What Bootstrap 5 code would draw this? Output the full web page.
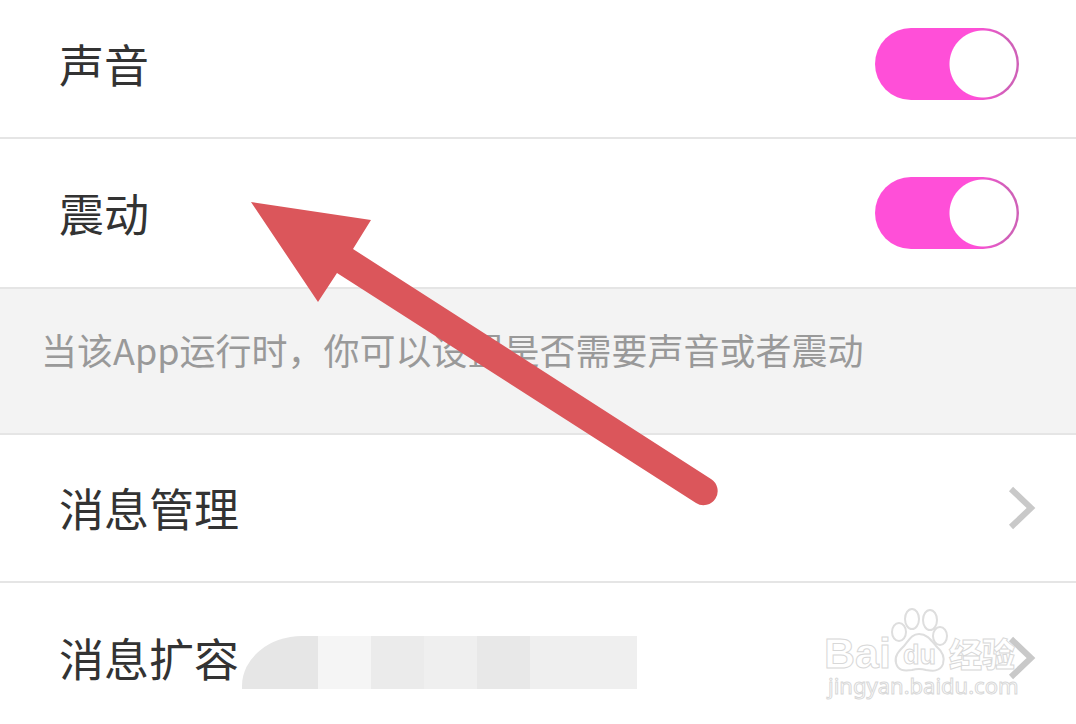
<!DOCTYPE html>
<html lang="zh-CN">
<head>
<meta charset="utf-8">
<meta name="viewport" content="width=device-width, initial-scale=1">
<title>消息设置</title>
<link href="https://cdn.jsdelivr.net/npm/bootstrap@5.3.0/dist/css/bootstrap.min.css" rel="stylesheet">
<style>
  body { font-family: "Noto Sans CJK SC", sans-serif; background: #fff; color: #333; overflow: hidden; }
  .setting-row { min-height: 150px; padding: 0 57px 0 59px; border-bottom: 2px solid #e5e5e5; }
  .setting-row.is-first { min-height: 139px; padding-bottom: 10px; }
  .setting-row.is-nav { min-height: 148px; padding-right: 40px; color: #333; }
  .setting-row.is-last { min-height: 141px; padding-top: 9px; border-bottom: 0; }
  .setting-label { font-size: 45px; line-height: 60px; }
  .form-check-input.pink-switch {
    width: 144px; height: 72px; margin: 0; border: 0; cursor: pointer; border-radius: 36px;
    background: radial-gradient(circle at 108px 36px, #fff 33px, transparent 34px), linear-gradient(90deg, #ff4fd8 100px, #d060b8 132px);
  }
  .hint-band { min-height: 146px; padding: 33px 41px; background: #f3f3f3; border-bottom: 2px solid #e5e5e5; color: #999; font-size: 36px; line-height: 54px; }
  .redacted { height: 53px; width: 395px; margin: 8px 0 0 3px; border-top-left-radius: 60px 50px; overflow: hidden; }
  .redacted > span { flex: 53 1 0; background: #efefef; }
  .redacted > .tone-wide { flex-grow: 76; background: #e6e6e6; }
  .redacted > .tone-pale { background: #f5f5f5; }
  .redacted > .tone-mid { background: #ebebeb; }
  .redacted > .tone-deep { background: #e8e8e8; }
  .redacted > .tone-end { flex-grow: 107; }
  .pointer-arrow { top: 195px; left: 245px; pointer-events: none; }
  .watermark { right: 50px; bottom: 16px; pointer-events: none; }
</style>
</head>
<body>
<main class="position-relative">
  <div class="setting-row is-first d-flex align-items-center justify-content-between">
    <label class="setting-label" for="sound">声音</label>
    <input class="form-check-input pink-switch" type="checkbox" role="switch" id="sound" checked>
  </div>
  <div class="setting-row d-flex align-items-center justify-content-between">
    <label class="setting-label" for="vibrate">震动</label>
    <input class="form-check-input pink-switch" type="checkbox" role="switch" id="vibrate" checked>
  </div>
  <div class="hint-band">当该App运行时，你可以设置是否需要声音或者震动</div>
  <a href="#manage" class="setting-row is-nav d-flex align-items-center justify-content-between text-decoration-none">
    <span class="setting-label">消息管理</span>
    <svg width="28" height="44" viewBox="0 0 28 44" fill="none" stroke="#c9c9c9" stroke-width="6" aria-hidden="true"><path d="M3 3 L23 22 L3 41"/></svg>
  </a>
  <a href="#expand" class="setting-row is-nav is-last d-flex align-items-center text-decoration-none">
    <span class="setting-label">消息扩容</span>
    <span class="redacted d-flex">
      <span class="tone-wide"></span><span class="tone-pale"></span><span class="tone-mid"></span><span></span><span class="tone-deep"></span><span class="tone-end"></span>
    </span>
    <svg class="ms-auto" width="28" height="44" viewBox="0 0 28 44" fill="none" stroke="#c9c9c9" stroke-width="6" aria-hidden="true"><path d="M3 3 L23 22 L3 41"/></svg>
  </a>

  <svg class="pointer-arrow position-absolute" width="480" height="320" viewBox="245 195 480 320" aria-hidden="true">
    <path fill="#db565b" d="M251 202 L371 220 L353 249 L711 479 A14 14 0 0 1 696 503 L337 273 L318 302 Z"/>
  </svg>

  <svg class="watermark position-absolute" width="206" height="104" viewBox="820 604 206 104" fill="#fff" fill-opacity=".3" stroke="#d8d8d8" stroke-width="1">
    <text x="824" y="668" font-size="43" font-family="Liberation Sans, Arial, sans-serif" font-weight="bold">Bai</text>
    <g stroke-width="2" stroke="#dedede">
      <ellipse cx="899" cy="632" rx="7" ry="9"/>
      <ellipse cx="912" cy="619" rx="7" ry="10"/>
      <ellipse cx="930" cy="620" rx="7" ry="10"/>
      <ellipse cx="940" cy="636" rx="7" ry="9"/>
      <path d="M919 634 C927 634 931 640 936 646 C943 652 945 658 943 664 C940 672 932 671 926 670 Q919 668 912 670 C904 671 898 671 896 663 C894 656 899 651 904 646 C909 640 912 634 919 634 Z"/>
    </g>
    <text x="903" y="664" font-size="27" font-family="Liberation Sans, Arial, sans-serif" font-weight="bold">du</text>
    <text x="949" y="667" font-size="33" font-weight="900" font-family="Noto Sans CJK SC, sans-serif">经验</text>
    <text x="828" y="694" font-size="22" font-family="Noto Sans, sans-serif">jingyan.baidu.com</text>
  </svg>
</main>
<script src="https://cdn.jsdelivr.net/npm/bootstrap@5.3.0/dist/js/bootstrap.bundle.min.js"></script>
</body>
</html>
